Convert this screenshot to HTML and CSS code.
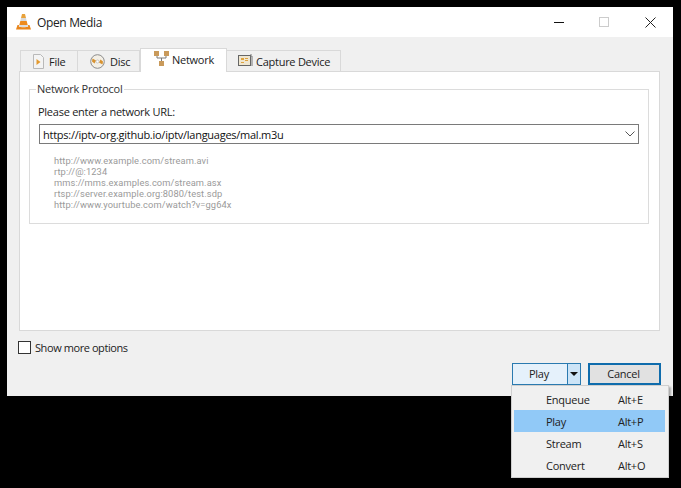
FILE: index.html
```html
<!DOCTYPE html>
<html lang="en">
<head>
<meta charset="utf-8">
<title>Open Media</title>
<link rel="stylesheet" href="styles.css">
</head>
<body>
<div class="window">
  <header class="titlebar">
    <svg class="app-icon" width="15" height="16" viewBox="0 0 15 16">
      <path d="M6 0h3l1 4H5z" fill="#e8a23c"/>
      <path d="M5 4h5l.7 3H4.300z" fill="#d9d9d9"/>
      <path d="M4.300 7h6.400l1 4H3.300z" fill="#ee8a1c"/>
      <path d="M1.500 11H3l-.2 1.500c1.500 1 8 1 9.400 0L12 11h1.500L15 15.500H0z" fill="#e9851a"/>
      <path d="M3.300 11h8.400l.3 1.500c-2 .8-7 .8-9 0z" fill="#dcdcdc"/>
    </svg>
    <span class="title">Open Media</span>
    <div class="controls">
      <svg width="11" height="11" viewBox="0 0 11 11" class="ctl ctl-min"><path d="M0 5.500h10" stroke="#111" fill="none"/></svg>
      <svg width="11" height="11" viewBox="0 0 11 11" class="ctl"><rect x=".5" y=".5" width="9" height="9" stroke="#ccc" fill="none"/></svg>
      <svg width="11" height="11" viewBox="0 0 11 11" class="ctl"><path d="M.5.500l10 10M10.500.500l-10 10" stroke="#222" fill="none"/></svg>
    </div>
  </header>
  <main class="content">
    <nav class="tabs">
      <div class="tab tab-file">
        <svg width="11" height="15" viewBox="0 0 11 15"><path d="M.5.500h7l3 3v11H.5z" fill="#f4f4f4" stroke="#b9b9b9"/><path d="M3.500 5l4 3-4 3z" fill="#e39a30"/></svg>
        <span>File</span>
      </div>
      <div class="tab tab-disc">
        <svg width="15" height="15" viewBox="0 0 15 15"><circle cx="7.500" cy="7.500" r="6.800" fill="#f3efe6" stroke="#8c8c8c"/><path d="M2.500 4.500l3.500 2-1.500 3-2.500-2zM12.500 10.500l-3.500-2 1.500-3 2.500 2z" fill="#d8922f"/><circle cx="7.500" cy="7.500" r="1.500" fill="#fff" stroke="#aaa" stroke-width=".6"/></svg>
        <span>Disc</span>
      </div>
      <div class="tab tab-active tab-network">
        <svg width="15" height="15" viewBox="0 0 15 15"><path d="M3 4v3h9V4M7.500 7v4" stroke="#7a7a7a" fill="none"/><rect x="0" y="0" width="5" height="5" fill="#c99a5b"/><rect x="10" y="0" width="5" height="5" fill="#c99a5b"/><rect x="5" y="10" width="5" height="5" fill="#c99a5b"/></svg>
        <span>Network</span>
      </div>
      <div class="tab tab-capture">
        <svg width="15" height="14" viewBox="0 0 15 14"><rect x=".5" y="1.500" width="12" height="10" fill="#efe6d0" stroke="#666"/><path d="M3 4h3v2H3zM7 4h3v1H7zM7 6h3v1H7zM3 8h3v1H3z" fill="#dfa33f"/><path d="M13 0v3M14 2v10" stroke="#777"/></svg>
        <span>Capture Device</span>
      </div>
    </nav>
    <section class="pane">
      <fieldset class="group">
        <legend class="group-title">Network Protocol</legend>
        <label class="url-label">Please enter a network URL:</label>
        <div class="combo">
          <span>https://iptv-org.github.io/iptv/languages/mal.m3u</span>
          <svg width="10" height="6" viewBox="0 0 10 6"><path d="M.5.500L5 5 9.500.500" stroke="#555" fill="none"/></svg>
        </div>
        <ul class="examples">
          <li>http://www.example.com/stream.avi</li>
          <li>rtp://@:1234</li>
          <li>mms://mms.examples.com/stream.asx</li>
          <li>rtsp://server.example.org:8080/test.sdp</li>
          <li>http://www.yourtube.com/watch?v=gg64x</li>
        </ul>
      </fieldset>
    </section>
    <div class="more">
      <span class="checkbox"></span>
      <span class="more-label">Show more options</span>
    </div>
    <div class="actions">
      <div class="split">
        <span class="split-main">Play</span>
        <span class="split-arrow"><i></i></span>
      </div>
      <div class="cancel">Cancel</div>
    </div>
  </main>
</div>
<div class="menu">
  <div class="menu-item"><span>Enqueue</span><span>Alt+E</span></div>
  <div class="menu-item menu-item-active"><span>Play</span><span>Alt+P</span></div>
  <div class="menu-item"><span>Stream</span><span>Alt+S</span></div>
  <div class="menu-item"><span>Convert</span><span>Alt+O</span></div>
</div>
</body>
</html>
```
FILE: styles.css
```css
* { box-sizing: border-box; }
html, body { margin: 0; padding: 0; }
body {
  width: 681px;
  height: 488px;
  background: #000;
  overflow: hidden;
  position: relative;
  font-family: "Open Sans", "Noto Sans", sans-serif;
  font-size: 11px;
  letter-spacing: -0.26px;
  color: #222;
}
.window {
  margin: 7px 0 0 7px;
  width: 666px;
  height: 389px;
  background: #f0f0f0;
  display: flex;
  flex-direction: column;
}
.titlebar {
  height: 30px;
  flex: none;
  background: #fff;
  display: flex;
  align-items: center;
  padding-left: 9px;
}
.app-icon { margin-right: 6px; }
.title { font-size: 12px; color: #222; letter-spacing: -0.35px; }
.controls {
  margin-left: auto;
  display: flex;
  gap: 35px;
  padding-right: 17px;
}
.ctl { display: block; }
.ctl-min { margin-right: -1px; }
.content {
  flex: 1;
  padding: 11px 12px 0 12px;
  display: flex;
  flex-direction: column;
}
.tabs {
  display: flex;
  align-items: flex-end;
  height: 23px;
  padding-left: 1px;
  position: relative;
  z-index: 1;
}
.tab {
  height: 21px;
  background: #f0f0f0;
  border: 1px solid #d9d9d9;
  border-bottom: none;
  display: flex;
  align-items: center;
  gap: 5px;
  padding-left: 12px;
  color: #222;
}
.tab svg { flex: none; }
.tab-file { width: 58px; }
.tab-disc { width: 62px; border-left: none; }
.tab-network { width: 87px; padding-left: 13px; gap: 3px; }
.tab-capture { width: 114px; border-left: none; padding-left: 11px; gap: 3px; }
.tab-active {
  height: 24px;
  background: #fff;
  margin-bottom: -1px;
  position: relative;
  padding-bottom: 2px;
}
.tab-active svg { margin-top: -3px; }
.pane {
  height: 260px;
  flex: none;
  width: 641px;
  background: #fff;
  border: 1px solid #d9d9d9;
  padding: 10px 10px 0 9px;
}
.group {
  margin: 0;
  height: 142px;
  border: 1px solid #dcdcdc;
  padding: 0 9px;
  min-width: 0;
  position: relative;
}
.group-title {
  padding: 0 2px 0 1px;
  margin-left: -3px;
  font-size: 11px;
  line-height: 14px;
  color: #333;
}
.url-label { display: block; margin: 8px 0 0 -1px; line-height: 16px; color: #222; }
.combo {
  margin-top: 4px;
  height: 20px;
  border: 1px solid #7a7a7a;
  background: #fff;
  display: flex;
  align-items: center;
  justify-content: space-between;
  padding: 0 3px;
  font-size: 11px;
  color: #111;
}
.examples {
  list-style: none;
  margin: 11px 0 0 15px;
  padding: 0;
  font-family: Roboto, "Open Sans", sans-serif;
  font-size: 9.3px;
  line-height: 11px;
  letter-spacing: 0.1px;
  color: #9a9a9a;
}
.more {
  display: flex;
  align-items: center;
  gap: 4px;
  margin: 10px 0 0 -1px;
  height: 13px;
}
.more-label { letter-spacing: -0.42px; }
.checkbox {
  width: 13px;
  height: 13px;
  background: #fff;
  border: 1px solid #333;
  flex: none;
}
.actions {
  display: flex;
  justify-content: flex-end;
  gap: 7px;
  margin-top: 9px;
  height: 22px;
  width: 642px;
}
.split {
  width: 69px;
  display: flex;
  border: 1px solid #2a7ab0;
  background: #e5f1fb;
}
.split-main { flex: 1; text-align: center; line-height: 20px; padding-right: 2px; }
.split-arrow {
  width: 13px;
  border-left: 1px solid #2a7ab0;
  background: #cce4f7;
  display: flex;
  align-items: center;
  justify-content: center;
}
.split-arrow i {
  width: 0;
  height: 0;
  border-left: 4px solid transparent;
  border-right: 4px solid transparent;
  border-top: 4px solid #111;
}
.cancel {
  width: 73px;
  text-align: center;
  line-height: 18px;
  padding-right: 2px;
  background: #e1e1e1;
  border: 2px solid #0f6cac;
}
.menu {
  position: absolute;
  left: 511px;
  top: 385px;
  width: 158px;
  height: 93px;
  background: #f0f0f0;
  border: 1px solid #cfcfcf;
  padding: 2px 3px 0 2px;
  box-shadow: 2px 2px 2px rgba(0, 0, 0, 0.3);
}
.menu-item {
  height: 22px;
  display: flex;
  align-items: center;
  padding-left: 32px;
  color: #222;
}
.menu-item span:first-child { width: 72px; }
.menu-item-active { background: #91c9f7; }
```
